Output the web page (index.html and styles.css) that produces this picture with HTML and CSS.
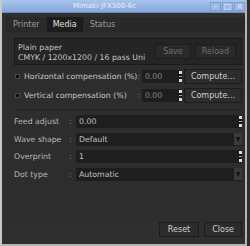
FILE: index.html
```html
<!DOCTYPE html>
<html lang="en">
<head>
  <meta name="viewport" content="width=device-width, initial-scale=1">
  <title>Mimaki-JFX500-6c</title>
  <link rel="stylesheet" href="styles.css">
</head>
<body>
  <div class="window">
    <div class="titlebar">
      <span class="title">Mimaki-JFX500-6c</span>
      <div class="winbtns">
        <span class="winbtn">&#8211;</span>
        <span class="winbtn">&#9633;</span>
        <span class="winbtn">&#215;</span>
      </div>
    </div>

    <div class="frame">
      <div class="tabs">
        <span class="tab">Printer</span>
        <span class="tab active">Media</span>
        <span class="tab">Status</span>
      </div>

      <div class="panel">
        <div class="media-box">
          <div class="media-text">
            <div>Plain paper</div>
            <div>CMYK / 1200x1200 / 16 pass Uni</div>
          </div>
          <button class="btn disabled save">Save</button>
          <button class="btn disabled">Reload</button>
        </div>

        <div class="comp-row">
          <span class="check"></span>
          <span class="comp-label">Horizontal compensation (%)</span>
          <span class="colon">:</span>
          <div class="spin small"><span>0.00</span><span class="arrows"></span></div>
          <button class="btn grow">Compute...</button>
        </div>
        <div class="comp-row">
          <span class="check"></span>
          <span class="comp-label">Vertical compensation (%)</span>
          <span class="colon">:</span>
          <div class="spin small"><span>0.00</span><span class="arrows"></span></div>
          <button class="btn grow">Compute...</button>
        </div>

        <div class="settings">
          <div class="set-row">
            <span class="set-label">Feed adjust</span>
            <span class="colon">:</span>
            <div class="spin"><span>0.00</span><span class="arrows"></span></div>
          </div>
          <div class="set-row">
            <span class="set-label">Wave shape</span>
            <span class="colon">:</span>
            <div class="combo"><span>Default</span><span class="drop">&#9660;</span></div>
          </div>
          <div class="set-row">
            <span class="set-label">Overprint</span>
            <span class="colon">:</span>
            <div class="spin"><span>1</span><span class="arrows"></span></div>
          </div>
          <div class="set-row">
            <span class="set-label">Dot type</span>
            <span class="colon">:</span>
            <div class="combo"><span>Automatic</span><span class="drop">&#9660;</span></div>
          </div>
        </div>
      </div>

      <div class="footer">
        <button class="btn reset">Reset</button>
        <button class="btn close">Close</button>
      </div>
    </div>
  </div>
</body>
</html>
```

FILE: styles.css
```css
body {
  margin: 0;
  background: #2e2e2e;
  font-family: "DejaVu Sans", sans-serif;
  font-size: 7.8px;
  color: #c4c4c4;
}
.window {
  width: 247px;
  height: 246px;
  display: flex;
  flex-direction: column;
  box-sizing: border-box;
  border: 2px solid #b4b4b4;
  border-top: none;
  border-left-color: #c8c8c8;
}
.titlebar {
  height: 12px;
  flex: none;
  background: linear-gradient(#a9c4ec, #86a8dc);
  border-bottom: 1px solid #6f8fc0;
  display: flex;
  align-items: center;
  padding-left: 71px;
}
.title {
  font-size: 7px;
  color: #e8eef8;
}
.winbtns {
  margin-left: auto;
  display: flex;
  gap: 1px;
}
.winbtn {
  width: 11px;
  height: 9px;
  border: 1px solid #7f9fd0;
  background: #9cb8e4;
  color: #e4ecf8;
  font-size: 8px;
  line-height: 8px;
  text-align: center;
  box-sizing: border-box;
}
.frame {
  flex: 1;
  background: #2f2f2f;
  display: flex;
  flex-direction: column;
  padding: 4px 0 4px 4px;
}
.tabs {
  display: flex;
  background: #282828;
  height: 15px;
  gap: 1px;
  padding-left: 1px;
}
.tab {
  padding: 0 6px;
  line-height: 15px;
  font-size: 8px;
  color: #9a9a9a;
  background: #2a2a2a;
}
.tab.active {
  background: #1c1c1c;
  color: #e0e0e0;
}
.panel {
  flex: 1;
  background: #2d2d2d;
  padding: 6px 3px 0 8px;
}
.media-box {
  display: flex;
  align-items: center;
  gap: 4px;
  border: 1px solid #1a1a1a;
  background: #252525;
  height: 25px;
  padding: 0 5px 0 3px;
}
.media-text {
  flex: 1;
  line-height: 10px;
  padding-top: 2px;
}
.btn {
  font-family: inherit;
  font-size: 8px;
  color: #cfcfcf;
  background: #2c2c2c;
  border: 1px solid #1c1c1c;
  height: 15px;
  padding: 0 6px;
}
.btn.disabled {
  color: #6e6e6e;
  background: #2a2a2a;
}
.btn.save {
  padding: 0 7px;
}
.btn.grow {
  flex: 1;
}
.btn.reset {
  padding: 0 8px;
}
.btn.close {
  padding: 0 7px;
}
.comp-row {
  display: flex;
  align-items: center;
  height: 15px;
  margin-top: 4px;
}
.check {
  flex: none;
  width: 3px;
  height: 3px;
  background: #0e0e0e;
  border: 1px solid #4a4a4a;
  margin: 0 4px 0 1px;
}
.comp-label {
  width: 119px;
  white-space: nowrap;
}
.comp-row .colon {
  width: 5px;
}
.colon {
  width: 7px;
  color: #777;
}
.spin {
  flex: 1;
  display: flex;
  align-items: center;
  justify-content: space-between;
  background: #1e1e1e;
  height: 13px;
  padding-left: 3px;
}
.spin.small {
  flex: none;
  width: 37px;
  color: #8a8a8a;
  margin-right: 2px;
}
.arrows {
  width: 3px;
  height: 11px;
  background: linear-gradient(#ddd 0 30%, #111 30% 45%, #aaa 45% 55%, #111 55% 70%, #ddd 70%);
}
.combo {
  flex: 1;
  display: flex;
  align-items: center;
  justify-content: space-between;
  background: #1e1e1e;
  height: 13px;
  padding-left: 3px;
}
.drop {
  font-size: 6px;
  color: #111;
  background: #3a3a3a;
  width: 8px;
  height: 12px;
  line-height: 11px;
  text-align: center;
}
.settings {
  border-top: 1px solid #222;
  margin-top: 6px;
  padding-top: 5px;
  display: flex;
  flex-direction: column;
  gap: 4.5px;
}
.set-row {
  display: flex;
  align-items: center;
  height: 13px;
}
.set-label {
  width: 55px;
  color: #b8b8b8;
}
.footer {
  display: flex;
  justify-content: flex-end;
  gap: 5px;
  padding: 0 3px 3px 0;
}
```
